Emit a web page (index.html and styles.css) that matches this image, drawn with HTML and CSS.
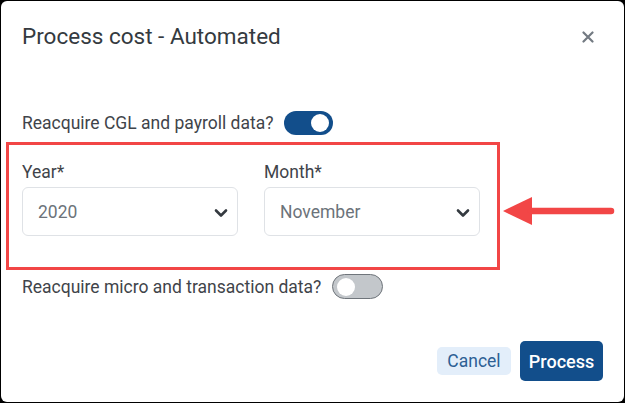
FILE: index.html
```html
<!DOCTYPE html>
<html lang="en">
<head>
<meta charset="utf-8">
<title>Process cost - Automated</title>
<link rel="stylesheet" href="styles.css">
</head>
<body>
<div class="dialog">
  <div class="header">
    <h1 class="title">Process cost - Automated</h1>
    <button class="close" aria-label="Close">
      <svg width="12" height="12" viewBox="0 0 12 12"><path d="M1.5 1.5 L10.5 10.5 M10.5 1.5 L1.5 10.5" stroke="#737a82" stroke-width="2.2" stroke-linecap="round" fill="none"/></svg>
    </button>
  </div>

  <div class="toggle-row first">
    <span class="toggle-label">Reacquire CGL and payroll data?</span>
    <span class="switch on"><span class="knob"></span></span>
  </div>

  <div class="highlight">
    <div class="field">
      <label class="field-label">Year*</label>
      <div class="select">
        <span class="select-value">2020</span>
        <svg class="chev" width="14" height="10" viewBox="0 0 14 10"><path d="M2 2.5 L7 7.5 L12 2.5" stroke="#343a40" stroke-width="2.6" fill="none" stroke-linecap="round" stroke-linejoin="round"/></svg>
      </div>
    </div>
    <div class="field">
      <label class="field-label">Month*</label>
      <div class="select">
        <span class="select-value">November</span>
        <svg class="chev" width="14" height="10" viewBox="0 0 14 10"><path d="M2 2.5 L7 7.5 L12 2.5" stroke="#343a40" stroke-width="2.6" fill="none" stroke-linecap="round" stroke-linejoin="round"/></svg>
      </div>
    </div>
    <svg class="arrow" width="112" height="32" viewBox="0 0 112 32"><path d="M0 16 L29 2 L29 30 Z" fill="#f24646"/><path d="M28 16 L108 16" stroke="#f24646" stroke-width="6.5" stroke-linecap="round"/></svg>
  </div>

  <div class="toggle-row second">
    <span class="toggle-label">Reacquire micro and transaction data?</span>
    <span class="switch off"><span class="knob"></span></span>
  </div>

  <div class="footer">
    <button class="btn btn-cancel">Cancel</button>
    <button class="btn btn-process">Process</button>
  </div>
</div>
</body>
</html>
```

FILE: styles.css
```css
* { box-sizing: border-box; }

html, body {
  margin: 0;
  padding: 0;
  background: #000;
}

body {
  width: 625px;
  height: 403px;
  overflow: hidden;
  font-family: Roboto, "Liberation Sans", Arial, sans-serif;
}

.dialog {
  margin: 1px;
  width: 623px;
  height: 401px;
  background: #fff;
  border-radius: 6px;
  padding: 0 21px 21px 21px;
  display: flex;
  flex-direction: column;
  position: relative;
}

.header {
  display: flex;
  justify-content: space-between;
  align-items: center;
  padding-top: 22px;
  height: 48px;
}

.title {
  margin: 0;
  font-size: 22.5px;
  line-height: 26px;
  font-weight: 400;
  color: #343a40;
}

.close {
  border: 0;
  background: none;
  padding: 0;
  margin-right: 9px;
  margin-top: 2px;
  display: flex;
}

.toggle-row {
  display: flex;
  align-items: center;
  gap: 11px;
  font-size: 17.5px;
  color: #3f444a;
}

.toggle-row.first { margin-top: 62px; }
.toggle-row.second { margin-top: 4px; }

.switch {
  display: inline-flex;
  align-items: center;
  border-radius: 13px;
  padding: 3px;
}

.switch.on {
  width: 49px;
  height: 24px;
  background: #124e8b;
  justify-content: flex-end;
}

.switch.on .knob {
  width: 18px;
  height: 18px;
  margin-right: 1px;
}

.switch.off {
  width: 51px;
  height: 25px;
  background: #c3c7cb;
  border: 1px solid #6f757b;
  justify-content: flex-start;
}

.switch.off .knob {
  width: 18px;
  height: 18px;
  margin-left: 1px;
}

.knob {
  display: block;
  border-radius: 50%;
  background: #fff;
}

.highlight {
  position: relative;
  margin-top: 7px;
  margin-left: -16px;
  width: 494px;
  border: 3px solid #f24646;
  padding: 15px 17px 31px 13px;
  display: flex;
  gap: 26px;
}

.field {
  width: 216px;
  display: flex;
  flex-direction: column;
  gap: 3px;
}

.field-label {
  font-size: 17.5px;
  line-height: 24px;
  color: #3f444a;
}

.select {
  height: 49px;
  border: 1px solid #dfe2e6;
  border-radius: 6px;
  display: flex;
  align-items: center;
  justify-content: space-between;
  padding: 0 9px 0 15px;
}

.select-value {
  font-size: 17.5px;
  color: #6c737a;
}

.chev { margin-top: 2px; }

.arrow {
  position: absolute;
  left: 494px;
  top: 50px;
}

.footer {
  margin-top: auto;
  display: flex;
  justify-content: flex-end;
  align-items: center;
  gap: 9px;
}

.btn {
  border: 0;
  font-family: Roboto, "Liberation Sans", Arial, sans-serif;
  border-radius: 5px;
  cursor: pointer;
  padding: 0;
}

.btn-cancel {
  width: 74px;
  height: 28px;
  background: #e3eefa;
  color: #2d5f94;
  font-size: 17.5px;
}

.btn-process {
  width: 83px;
  height: 40px;
  background: #124e8b;
  color: #fff;
  font-size: 18px;
  font-weight: 500;
}
```
